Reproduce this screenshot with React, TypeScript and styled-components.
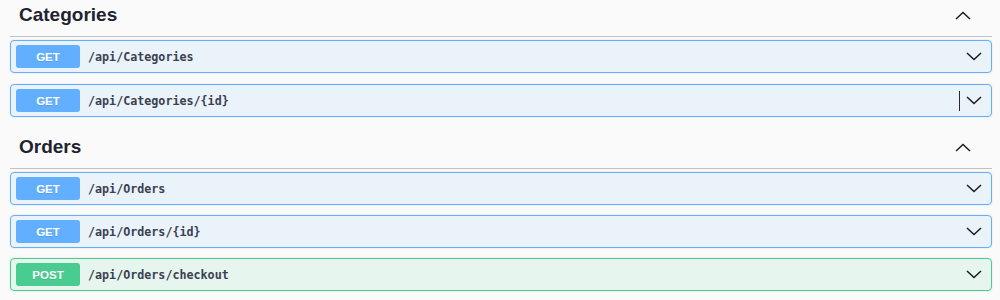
import styled, { createGlobalStyle } from "styled-components";

const GlobalStyle = createGlobalStyle`
  html, body {
    margin: 0;
    padding: 0;
    background: #fafafa;
  }
  body {
    font-family: "Liberation Sans", Arial, sans-serif;
  }
`;

type Method = "get" | "post";

const methodColors: Record<Method, { main: string; bg: string }> = {
  get: { main: "#61affe", bg: "rgba(97, 175, 254, 0.1)" },
  post: { main: "#49cc90", bg: "rgba(73, 204, 144, 0.1)" },
};

const Page = styled.div`
  display: flex;
  flex-direction: column;
  margin: 0 8px 0 10px;
`;

const Section = styled.section`
  display: flex;
  flex-direction: column;
  margin-bottom: 4px;
`;

const SectionHeader = styled.div`
  display: flex;
  align-items: center;
  justify-content: space-between;
  padding: 4px 21px 10px 9px;
  border-bottom: 1px solid rgba(59, 65, 81, 0.3);
`;

const SectionTitle = styled.h4`
  margin: 0;
  font-size: 19px;
  line-height: 22px;
  font-weight: 700;
  color: #1f2330;
`;

const Blocks = styled.div<{ $gap: number }>`
  display: flex;
  flex-direction: column;
  gap: ${({ $gap }) => $gap}px;
  padding: 3px 0 11px;
`;

const Block = styled.div<{ $method: Method }>`
  display: flex;
  align-items: center;
  height: 33px;
  box-sizing: border-box;
  padding: 4px 9px 4px 5px;
  border: 1px solid ${({ $method }) => methodColors[$method].main};
  border-radius: 4px;
  background: ${({ $method }) => methodColors[$method].bg};
  box-shadow: 0 0 2px rgba(0, 0, 0, 0.12);
`;

const MethodBadge = styled.span<{ $method: Method }>`
  display: inline-flex;
  align-items: center;
  justify-content: center;
  width: 64px;
  height: 23px;
  border-radius: 3px;
  background: ${({ $method }) => methodColors[$method].main};
  color: #fff;
  font-size: 11.5px;
  font-weight: 700;
  text-shadow: 0 1px 0 rgba(0, 0, 0, 0.1);
`;

const PathText = styled.span`
  flex: 1;
  margin-left: 8px;
  font-family: "DejaVu Sans Mono", "Liberation Mono", monospace;
  font-size: 11.7px;
  font-weight: 700;
  color: #3b4151;
`;

const Caret = styled.span`
  width: 1px;
  height: 20px;
  margin-right: 6px;
  background: #2a2a2a;
`;

const Chevron = ({ up }: { up?: boolean }) => (
  <svg width="16" height="9" viewBox="0 0 16 9">
    <polyline
      points={up ? "1,8 8,1.5 15,8" : "1,1 8,7.5 15,1"}
      fill="none"
      stroke="#1c1c1c"
      strokeWidth="1.5"
    />
  </svg>
);

type Op = { method: Method; path: string; caret?: boolean };

const sections: { title: string; gap: number; ops: Op[] }[] = [
  {
    title: "Categories",
    gap: 11,
    ops: [
      { method: "get", path: "/api/Categories" },
      { method: "get", path: "/api/Categories/{id}", caret: true },
    ],
  },
  {
    title: "Orders",
    gap: 10,
    ops: [
      { method: "get", path: "/api/Orders" },
      { method: "get", path: "/api/Orders/{id}" },
      { method: "post", path: "/api/Orders/checkout" },
    ],
  },
];

export default function App() {
  return (
    <>
      <GlobalStyle />
      <Page>
        {sections.map((s) => (
          <Section key={s.title}>
            <SectionHeader>
              <SectionTitle>{s.title}</SectionTitle>
              <Chevron up />
            </SectionHeader>
            <Blocks $gap={s.gap}>
              {s.ops.map((op) => (
                <Block key={op.path + op.method} $method={op.method}>
                  <MethodBadge $method={op.method}>
                    {op.method.toUpperCase()}
                  </MethodBadge>
                  <PathText>{op.path}</PathText>
                  {op.caret && <Caret />}
                  <Chevron />
                </Block>
              ))}
            </Blocks>
          </Section>
        ))}
      </Page>
    </>
  );
}
